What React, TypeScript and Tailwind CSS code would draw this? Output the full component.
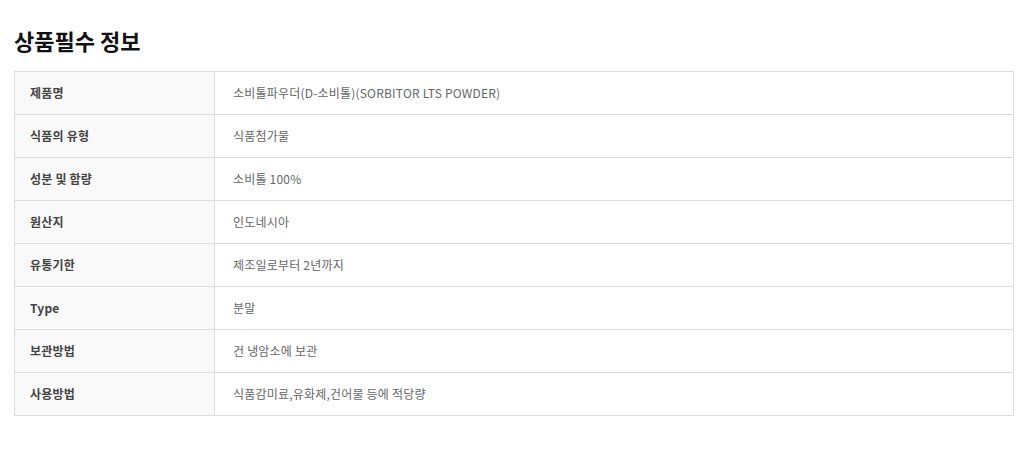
const rows: [string, string][] = [
  ['제품명', '소비톨파우더(D-소비톨)(SORBITOR LTS POWDER)'],
  ['식품의 유형', '식품첨가물'],
  ['성분 및 함량', '소비톨 100%'],
  ['원산지', '인도네시아'],
  ['유통기한', '제조일로부터 2년까지'],
  ['Type', '분말'],
  ['보관방법', '건 냉암소에 보관'],
  ['사용방법', '식품감미료,유화제,건어물 등에 적당량'],
];

export default function App() {
  return (
    <div className="min-h-[472px] bg-white px-[14px] pt-[25px] font-['Noto_Sans_CJK_KR',sans-serif]">
      <h2 className="text-[22px] font-bold leading-[30px] text-[#111]">상품필수 정보</h2>
      <table className="mt-[16px] w-[1000px] border-collapse border border-[#ddd] text-[12px] tracking-[0.2px]">
        <tbody>
          {rows.map(([label, value]) => (
            <tr key={label} className="h-[43px] border-b border-[#ddd]">
              <th className="w-[200px] border-r border-[#ddd] bg-[#f9f9f9] pl-[15px] text-left font-bold text-[#444]">
                {label}
              </th>
              <td className="pl-[18px] text-left text-[#666]">{value}</td>
            </tr>
          ))}
        </tbody>
      </table>
    </div>
  );
}
